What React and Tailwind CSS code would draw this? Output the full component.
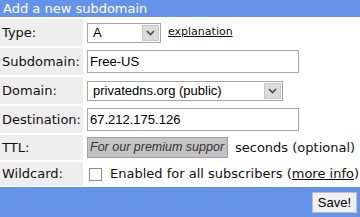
import React from 'react';

const verdana = { fontFamily: '"DejaVu Sans", Verdana, sans-serif' };

const Chevron = () => (
  <svg width="9" height="6" viewBox="0 0 9 6" className="block">
    <path d="M1 1 L4.5 4.5 L8 1" fill="none" stroke="#4a4a4a" strokeWidth="1.6" />
  </svg>
);

const Select = ({ value, className }) => (
  <div className={`flex items-stretch h-[20px] border border-[#a5a5a5] bg-white ${className}`}>
    <span className="flex-1 pl-[5px] text-[13px] leading-[18px] text-black font-['Liberation_Sans',Arial,sans-serif] whitespace-nowrap overflow-hidden">
      {value}
    </span>
    <span className="w-[17px] m-[1px] flex items-center justify-center bg-[#dcdcdc] border border-[#c8c8c8]">
      <Chevron />
    </span>
  </div>
);

const Input = ({ value }) => (
  <div className="w-[212px] h-[23px] border border-[#a8a8a8] bg-white pl-[2px] text-[13px] leading-[21px] text-black font-['Liberation_Sans',Arial,sans-serif]">
    {value}
  </div>
);

const Row = ({ label, h, children }) => (
  <div className="flex gap-[4px]" style={{ height: h }}>
    <div className="w-[83px] shrink-0 bg-[#eeeeee] flex items-center pl-[2px] text-[13px] text-[#111]">
      {label}
    </div>
    <div className="flex-1 flex items-center">{children}</div>
  </div>
);

export default function App() {
  return (
    <div className="w-[360px] h-[217px] bg-white flex flex-col overflow-hidden" style={verdana}>
      <div className="h-[17px] bg-[#6593e9] text-white text-[13px] leading-[17px] pl-[3px]">
        Add a new subdomain
      </div>
      <div className="flex flex-col gap-[2px] pt-[2px]">
        <Row label="Type:" h={27}>
          <Select value="A" className="w-[74px]" />
          <a className="ml-[7px] text-[11px] underline text-[#111]">explanation</a>
        </Row>
        <Row label="Subdomain:" h={27}>
          <Input value="Free-US" />
        </Row>
        <Row label="Domain:" h={27}>
          <Select value="privatedns.org (public)" className="w-[196px]" />
        </Row>
        <Row label="Destination:" h={27}>
          <Input value="67.212.175.126" />
        </Row>
        <Row label="TTL:" h={25}>
          <div className="w-[141px] h-[21px] bg-[#c3c3c3] border border-[#a0a0a0] pl-[2px] text-[12.5px] leading-[19px] italic text-[#333] whitespace-nowrap font-['Liberation_Sans',Arial,sans-serif]">
            For our premium suppor
          </div>
          <span className="ml-[7px] text-[13px] text-[#111] whitespace-nowrap">seconds (optional)</span>
        </Row>
        <Row label="Wildcard:" h={24}>
          <span className="ml-[2px] w-[13px] h-[13px] border border-[#8c8c8c] bg-white shrink-0" />
          <span className="ml-[8px] text-[13px] text-[#111] whitespace-nowrap">
            Enabled for all subscribers (<a className="underline">more info</a>)
          </span>
        </Row>
      </div>
      <div className="mt-[1px] flex-1 bg-[#6593e9] flex justify-end items-start pt-[5px] pr-[3px]">
        <button className="h-[21px] px-[5px] bg-[#efefef] border border-[#bdbdbd] text-[13px] leading-[19px] text-black font-['Liberation_Sans',Arial,sans-serif]">
          Save!
        </button>
      </div>
    </div>
  );
}
